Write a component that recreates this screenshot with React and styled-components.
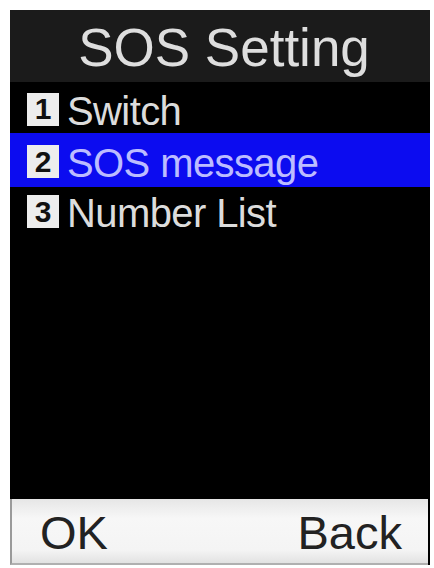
import React from 'react';
import styled, { createGlobalStyle } from 'styled-components';

const GlobalStyle = createGlobalStyle`
    html, body {
        margin: 0;
        padding: 0;
        background: #ffffff;
    }
    body {
        font-family: 'Liberation Sans', Arial, sans-serif;
    }
`;

const Page = styled.div`
    width: 434px;
    height: 568px;
    padding: 10px 4px 0 10px;
    box-sizing: border-box;
`;

const Screen = styled.div`
    width: 420px;
    height: 555px;
    background: #000;
    display: flex;
    flex-direction: column;
`;

const TitleBar = styled.div`
    height: 72px;
    background: #1b1b1b;
    color: #dedede;
    font-size: 53px;
    display: flex;
    align-items: center;
    justify-content: center;
    padding-left: 8px;
    padding-top: 2px;
    box-sizing: border-box;
`;

const Menu = styled.ul`
    list-style: none;
    margin: 0;
    padding: 0;
    flex: 1;
`;

const Item = styled.li`
    height: ${(p) => p.$h}px;
    box-sizing: border-box;
    padding: 7px 0 0 17px;
    display: flex;
    align-items: center;
    gap: 8px;
    background: ${(p) => (p.$active ? '#0c0cf0' : '#000')};
    color: ${(p) => (p.$active ? '#bcbcff' : '#dcdcdc')};
    font-size: 40px;
    letter-spacing: -0.6px;
`;

const Badge = styled.span`
    width: 32px;
    height: 33px;
    margin-top: -4px;
    background: #ededed;
    color: #111;
    font-size: 30px;
    font-weight: bold;
    letter-spacing: 0;
    display: flex;
    align-items: center;
    justify-content: center;
    flex-shrink: 0;
`;

const SoftKeys = styled.div`
    height: 66px;
    background: linear-gradient(#e6e6e6, #f7f7f7 30%, #f4f4f4 80%, #e2e2e2);
    border-left: 2px solid #9a9a9a;
    border-bottom: 2px solid #b0b0b0;
    display: flex;
    align-items: center;
    justify-content: space-between;
    padding: 2px 26px 0 28px;
    color: #222;
    font-size: 47px;
    box-sizing: border-box;
    width: 418px;
`;

const items = [
    { n: '1', label: 'Switch', h: 51 },
    { n: '2', label: 'SOS message', h: 54, active: true },
    { n: '3', label: 'Number List', h: 46 },
];

export default function App() {
    return (
        <Page>
            <GlobalStyle />
            <Screen>
                <TitleBar>SOS Setting</TitleBar>
                <Menu>
                    {items.map((it) => (
                        <Item key={it.n} $h={it.h} $active={it.active}>
                            <Badge>{it.n}</Badge>
                            {it.label}
                        </Item>
                    ))}
                </Menu>
                <SoftKeys>
                    <span>OK</span>
                    <span>Back</span>
                </SoftKeys>
            </Screen>
        </Page>
    );
}
